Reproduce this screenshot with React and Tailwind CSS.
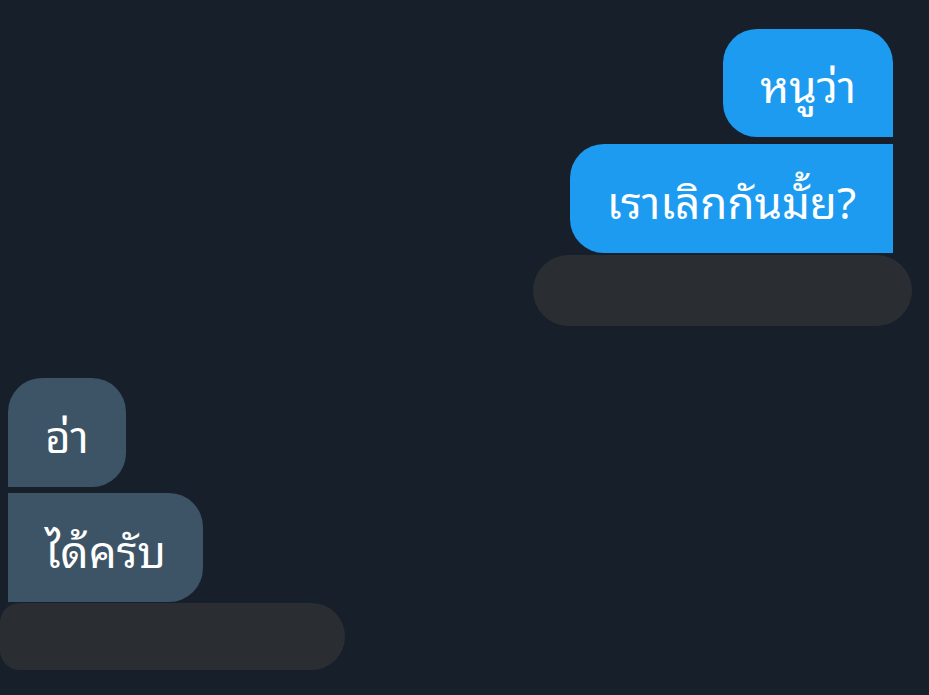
export default function App() {
  return (
    <div className="w-[929px] h-[695px] bg-[#17202a] overflow-hidden flex flex-col pt-[29px]" style={{ fontFamily: '"Noto Sans Thai Looped", "Noto Looped Thai", Loma, Waree, Garuda, "Noto Sans", sans-serif' }}>
      <div className="flex flex-col items-end">
        <div className="mr-[36px] h-[108px] flex items-center px-[37px] bg-[#1d9bf0] text-white text-[44px] rounded-tl-[34px] rounded-tr-[34px] rounded-bl-[34px]">
          หนูว่า
        </div>
        <div className="mt-[7px] mr-[36px] h-[109px] flex items-center px-[37px] bg-[#1d9bf0] text-white text-[44px] rounded-tl-[34px] rounded-bl-[34px]">
          เราเลิกกันมั้ย?
        </div>
        <div className="mt-[2px] mr-[17px] w-[379px] h-[71px] bg-[#2a2e33] rounded-[36px]"></div>
      </div>
      <div className="mt-[52px] flex flex-col items-start">
        <div className="ml-[8px] h-[109px] flex items-center px-[37px] bg-[#3d5466] text-white text-[44px] rounded-tl-[34px] rounded-tr-[34px] rounded-br-[34px]">
          อ่า
        </div>
        <div className="mt-[6px] ml-[8px] h-[109px] flex items-center px-[37px] bg-[#3d5466] text-white text-[44px] rounded-tr-[34px] rounded-br-[34px]">
          ได้ครับ
        </div>
        <div className="mt-[1px] w-[345px] h-[67px] bg-[#2a2e33] rounded-r-[34px] rounded-l-[20px]"></div>
      </div>
    </div>
  );
}
